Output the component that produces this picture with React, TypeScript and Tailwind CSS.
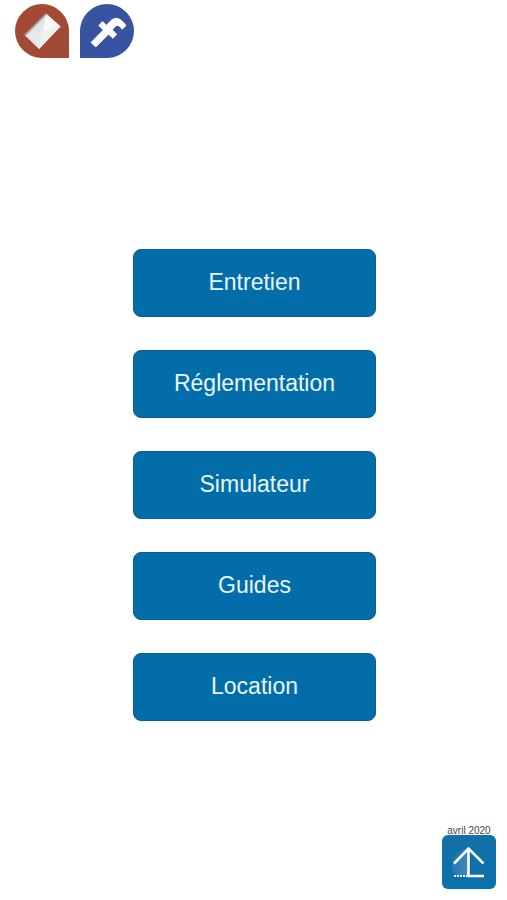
const links = [
  { label: "Entretien", href: "#entretien" },
  { label: "Réglementation", href: "#reglementation" },
  { label: "Simulateur", href: "#simulateur" },
  { label: "Guides", href: "#guides" },
  { label: "Location", href: "#location" },
];

function MailIcon() {
  return (
    <svg viewBox="0 0 54 54" className="size-[54px]" aria-hidden="true">
      <path d="M27 0a27 27 0 0 0 0 54h27V27A27 27 0 0 0 27 0Z" fill="#a34a35" />
      <path d="M31 9.5 45.5 22.5 24 45 9.5 31Z" fill="#e6e9e9" />
      <path d="M31 9.5 45.5 22.5 27.5 27Z" fill="#f6f8f8" />
      <path d="M31 9.5 27.5 27 9.5 31Z" fill="#e3e6e6" />
      <path d="M27.5 27 45.5 22.5 24 45Z" fill="#eff2f2" />
      <path d="M9.5 31 31 9.5 32 10.5 10.5 32Z" fill="#a99f9b" />
    </svg>
  );
}

function FacebookIcon() {
  return (
    <svg viewBox="0 0 54 54" className="size-[54px]" aria-hidden="true">
      <path d="M27 0a27 27 0 0 1 0 54H0V27A27 27 0 0 1 27 0Z" fill="#3853a0" />
      <path
        d="M11 38.5 23.3 26 18.8 21.5 22.5 17.5 26.5 21.2 30.5 17C34 13.5 38 13.5 41.5 16.5 43.5 18 45 20 46 21.5L42.2 25.2C39.5 21.5 37.5 20.5 35 22.5L32.3 25.8 36.7 30.3 33 34.3 28.5 30.2 15.8 43Z"
        fill="#fff"
        stroke="#fff"
        strokeWidth="0.8"
      />
    </svg>
  );
}

function UpIcon() {
  return (
    <svg viewBox="0 0 54 54" className="size-[54px]" aria-hidden="true">
      <defs>
        <linearGradient id="glow" x1="0" x2="1" y1="0" y2="0">
          <stop offset="0" stopColor="#2379b0" />
          <stop offset="1" stopColor="#3f8aba" />
        </linearGradient>
      </defs>
      <path d="M26 13 10 29c-1 6 2 11 6 12h10Z" fill="url(#glow)" />
      <path d="M26 13C17 14 11 19 10 29Z" fill="#2379b0" />
      <path
        d="M12 28.5 26.5 13.5 41.5 28.5M26.5 14V41H42"
        fill="none"
        stroke="#fff"
        strokeWidth="2.6"
      />
      <path d="M12 41H25" stroke="#fff" strokeWidth="2" strokeDasharray="2 1" />
    </svg>
  );
}

export default function App() {
  return (
    <div className="flex min-h-screen flex-col bg-white font-['Liberation_Sans',Arial,sans-serif]">
      <header className="flex gap-[11px] px-[15px] pt-1">
        <a href="#contact" aria-label="Contact">
          <MailIcon />
        </a>
        <a href="#facebook" aria-label="Facebook">
          <FacebookIcon />
        </a>
      </header>

      <nav className="flex flex-1 flex-col items-center justify-center gap-[33px] pt-[84px] pl-0.5">
        {links.map((link) => (
          <a
            key={link.href}
            href={link.href}
            className="flex h-[68px] w-[243px] items-center justify-center rounded-lg border border-[#075f92] bg-[#026da8] text-[23px] text-[#e8f6ff]"
          >
            {link.label}
          </a>
        ))}
      </nav>

      <footer className="flex flex-col items-end px-[11px] pb-[11px]">
        <div className="flex flex-col items-center">
          <p className="text-[10px] leading-[8px] text-[#444444]">avril 2020</p>
          <a
            href="#top"
            aria-label="Haut de page"
            className="rounded-md bg-linear-to-b from-[#1470a6] to-[#0871ac]"
          >
            <UpIcon />
          </a>
        </div>
      </footer>
    </div>
  );
}
